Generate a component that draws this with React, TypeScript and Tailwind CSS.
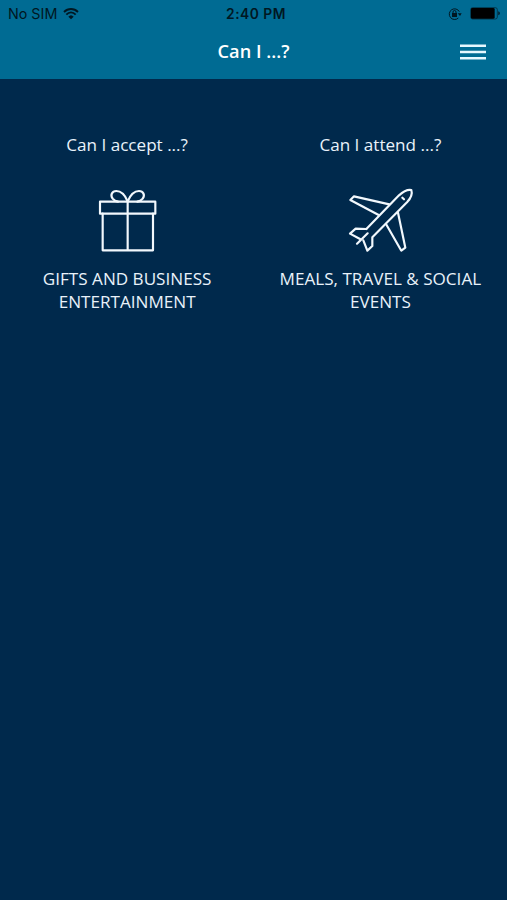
import type { ReactNode } from 'react';

function WifiIcon() {
  return (
    <svg className="ml-[6px] h-[12px] w-[16px]" viewBox="0 0 48 36" fill="none" stroke="#001722" strokeWidth="5.500">
      <path d="M3 12C15 0 33 0 45 12" />
      <path d="M10 20C18 11 30 11 38 20" />
      <path d="M16 26C21 20 27 20 32 26L24 34Z" fill="#001722" stroke="none" />
    </svg>
  );
}

function RotationLockIcon() {
  return (
    <svg className="h-[14px] w-[14px]" viewBox="0 0 42 42" fill="none" stroke="#001722" strokeWidth="3">
      <path d="M31 33A16 16 0 1 1 34 14" />
      <path d="M29 19H41L36 27Z" fill="#001722" stroke="none" />
      <rect x="12" y="18" width="15" height="12" fill="#001722" stroke="none" />
      <path d="M15 19V15A4.500 4.500 0 0 1 24 15V19" />
    </svg>
  );
}

function BatteryIcon() {
  return (
    <svg className="ml-[8px] h-[13px] w-[31px]" viewBox="0 0 93 39" fill="none">
      <rect x="2" y="2" width="80" height="34" rx="6" stroke="#00212e" strokeWidth="2" />
      <rect x="3" y="3" width="71" height="32" rx="4" fill="#000" />
      <path d="M85 13C91 15 91 23 85 25Z" fill="#001722" />
    </svg>
  );
}

function MenuIcon() {
  return (
    <svg className="h-[18px] w-[26px]" viewBox="0 0 78 54" stroke="#e6f7ff" strokeWidth="7.500">
      <path d="M0 8H78M0 27H78M0 46H78" />
    </svg>
  );
}

function GiftIcon() {
  return (
    <svg
      className="h-[80px] w-[85px]"
      viewBox="0 0 255 240"
      fill="none"
      stroke="#f2f8fd"
      strokeWidth="6.500"
      strokeLinejoin="round"
      strokeLinecap="round"
    >
      <rect x="45" y="65" width="166" height="36" />
      <path d="M53 101V211H204V101M128 65V211" />
      <path d="M128 64C120 45 107 33 94 33C81 33 75 45 83 56C87 61 92 64 99 65" />
      <path d="M128 64C136 45 149 33 162 33C175 33 181 45 173 56C169 61 164 64 157 65" />
    </svg>
  );
}

function PlaneIcon() {
  return (
    <svg
      className="h-[80px] w-[90px]"
      viewBox="0 0 270 240"
      fill="none"
      stroke="#f2f8fd"
      strokeWidth="6.500"
      strokeLinejoin="round"
      strokeLinecap="round"
    >
      <path d="M94 147L192 46C204 35 218 28 229 30C233 42 227 55 216 67L112 172V198L97 212L85 181" />
      <path d="M94 147L62 146L45 161L75 177" />
      <path d="M66 191L98 160" />
      <path d="M163 73L57 49L46 60L131 105" />
      <path d="M189 98L211 203L199 212L153 132" />
      <path d="M202 53L207 58" />
    </svg>
  );
}

function Topic({ question, icon, label }: { question: string; icon: ReactNode; label: string }) {
  return (
    <button className="flex flex-col items-center px-5 text-center text-[17.100px] leading-[23px] text-[#e9f2fa]">
      <span>{question}</span>
      <span className="mt-[24px] mb-[7px]">{icon}</span>
      <span className="-mx-4">{label}</span>
    </button>
  );
}

export default function App() {
  return (
    <div className="flex h-[900px] w-[507px] flex-col bg-[#00294c] font-['Open_Sans',sans-serif]">
      <header className="h-[79px] bg-[#006b93]">
        <div className="grid h-[27px] grid-cols-3 items-center pr-[6px] pl-[8px] font-['Inter',sans-serif] text-[#001722]">
          <div className="flex items-center">
            <span className="text-[14.300px]">No SIM</span>
            <WifiIcon />
          </div>
          <span className="pt-px pl-[3px] text-center text-[13.800px] font-semibold tracking-[0.5px]">2:40 PM</span>
          <div className="flex items-center justify-end">
            <RotationLockIcon />
            <BatteryIcon />
          </div>
        </div>
        <div className="grid h-[49px] grid-cols-[1fr_auto_1fr] items-center pr-[21px] pl-[21px]">
          <h1 className="col-start-2 text-[18.200px] font-semibold text-white">Can I ...?</h1>
          <button aria-label="Menu" className="justify-self-end">
            <MenuIcon />
          </button>
        </div>
      </header>
      <main className="grid grid-cols-2 items-start pt-[54px] pl-[0.5px]">
        <Topic question="Can I accept ...?" icon={<GiftIcon />} label="GIFTS AND BUSINESS ENTERTAINMENT" />
        <Topic question="Can I attend ...?" icon={<PlaneIcon />} label="MEALS, TRAVEL & SOCIAL EVENTS" />
      </main>
    </div>
  );
}
